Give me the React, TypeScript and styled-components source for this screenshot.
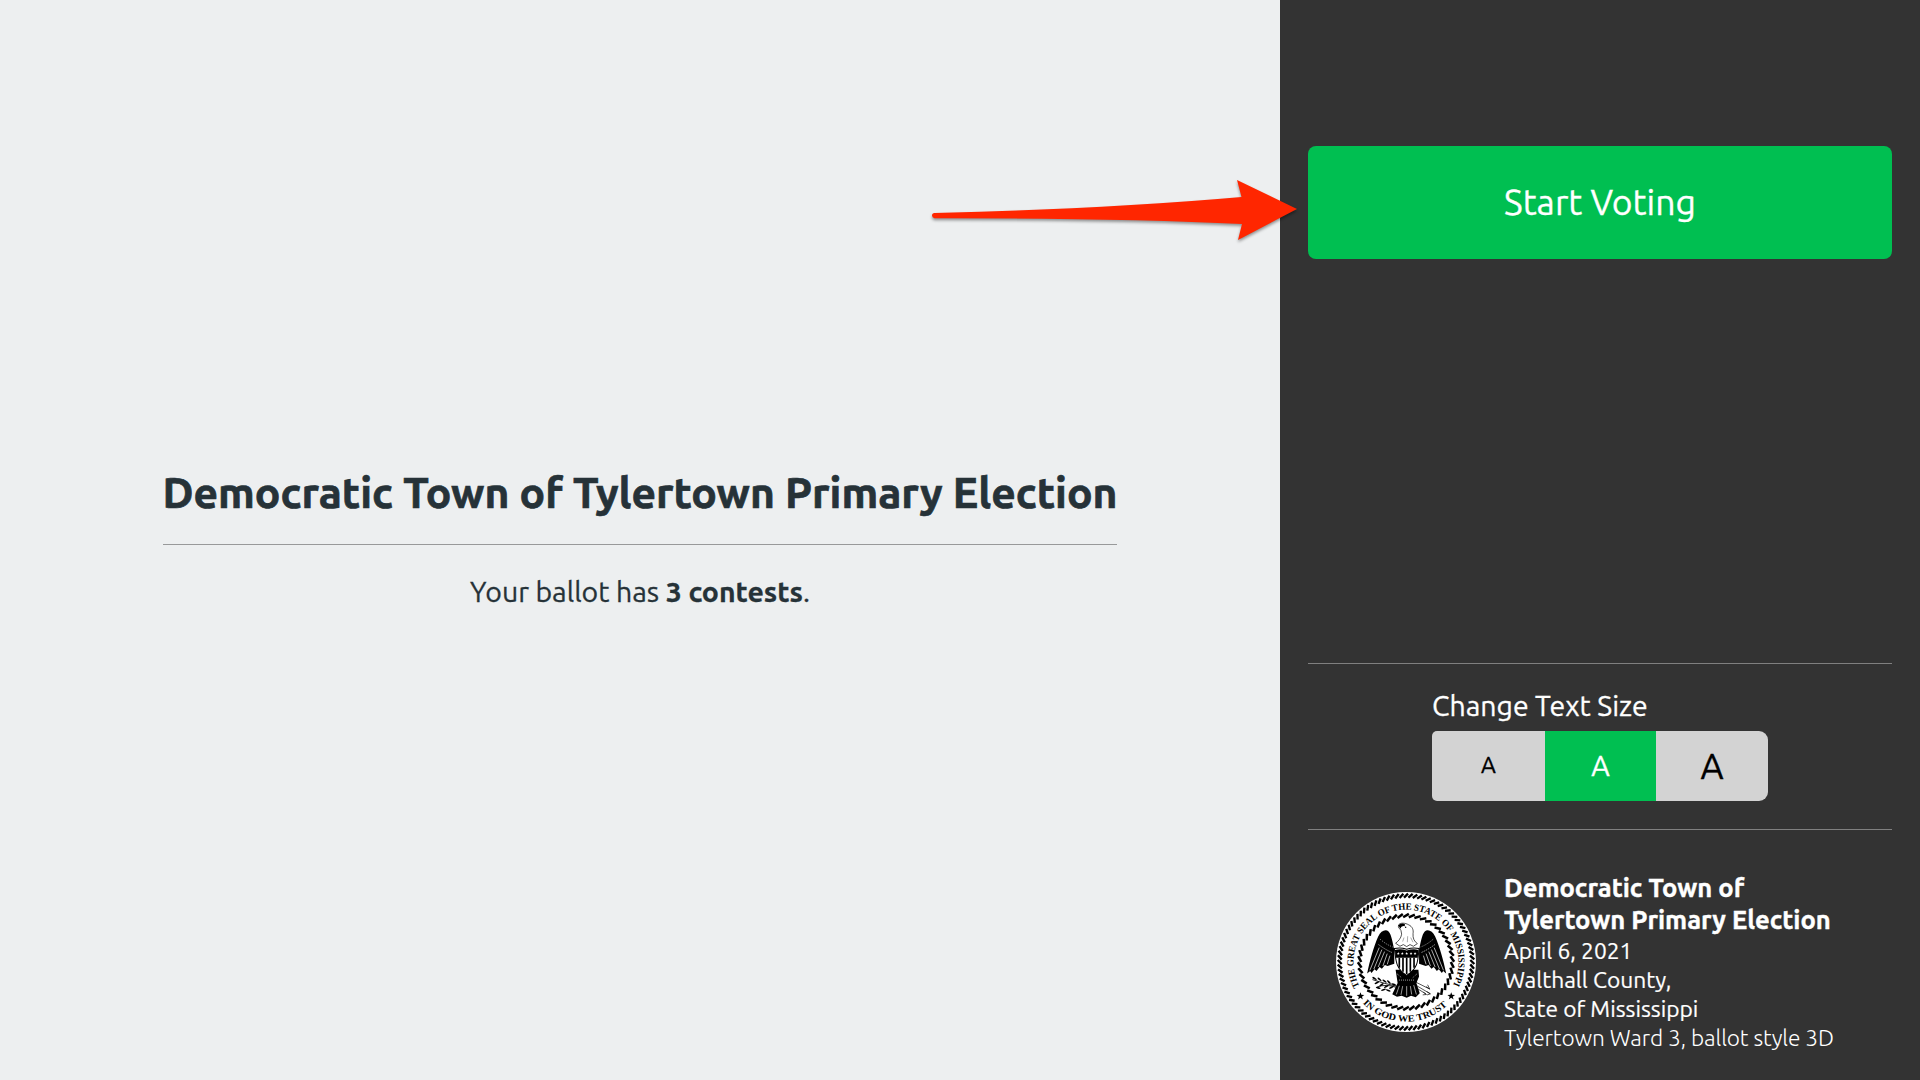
import React from 'react';
import styled, { createGlobalStyle } from 'styled-components';

const GlobalStyle = createGlobalStyle`
  *, *::before, *::after { box-sizing: border-box; }
  body {
    margin: 0;
    background: #edeff0;
    color: #263238;
    font-family: Ubuntu, 'Noto Sans', 'Open Sans', sans-serif;
    overflow: hidden;
  }
`;

const Screen = styled.div`
  position: relative;
  display: grid;
  grid-template-columns: 1280px 640px;
  width: 1920px;
  height: 1080px;
`;

const Main = styled.main`
  display: flex;
  flex-direction: column;
  align-items: center;
  padding-top: 463px;
  background: #edeff0;
`;

const Intro = styled.div`
  width: 954px;
  text-align: center;
`;

const Title = styled.h1`
  display: flex;
  justify-content: center;
  margin: 0;
  padding-bottom: 23px;
  border-bottom: 1px solid #98999a;
  font-size: 42.67px;
  line-height: 58px;
  font-weight: 700;
  white-space: nowrap;
  -webkit-text-stroke: 0.7px currentColor;
`;

const Summary = styled.p`
  margin: 28px 0 0;
  font-size: 28.44px;
  line-height: 37px;
  white-space: nowrap;
  -webkit-text-stroke: 0.3px currentColor;
`;

const Sidebar = styled.aside`
  display: flex;
  flex-direction: column;
  padding: 146px 28px 0;
  background: #333333;
  color: #ffffff;
`;

const StartButton = styled.button`
  height: 113px;
  padding: 0 0 2px;
  border: 0;
  border-radius: 8px;
  background: #00bf51;
  color: #ffffff;
  font-family: inherit;
  font-size: 35.56px;
  line-height: 46px;
  -webkit-text-stroke: 0.3px currentColor;
`;

const Settings = styled.section`
  display: flex;
  flex-direction: column;
  align-items: center;
  height: 167px;
  margin-top: 404px;
  padding-top: 23px;
  border-top: 1px solid #808080;
  border-bottom: 1px solid #808080;
`;

const SizePicker = styled.div`
  width: 336px;
`;

const SizeLabel = styled.div`
  height: 44px;
  font-size: 28.44px;
  line-height: 36px;
  white-space: nowrap;
  -webkit-text-stroke: 0.3px currentColor;
`;

const Segments = styled.div`
  display: grid;
  grid-template-columns: 113px 111px 112px;
  height: 70px;
  overflow: hidden;
  border-radius: 5px 9px 9px 5px;
`;

const Segment = styled.button<{ $size: number; $lift?: number; $active?: boolean }>`
  padding: 0 0 ${(p) => p.$lift ?? 0}px;
  border: 0;
  background: ${(p) => (p.$active ? '#00bf51' : '#d3d3d3')};
  color: ${(p) => (p.$active ? '#ffffff' : '#000000')};
  font-family: inherit;
  font-size: ${(p) => p.$size}px;
  line-height: 46px;
  -webkit-text-stroke: 0.3px currentColor;
`;

const Footer = styled.footer`
  display: flex;
  padding: 41px 0 0 28px;
`;

const SealSvg = styled.svg`
  flex: none;
  width: 140px;
  height: 140px;
  margin: 21px 28px 0 0;
`;

const Details = styled.div`
  padding-top: 1px;
  font-size: 22.75px;
  line-height: 29px;
  white-space: nowrap;
`;

const ElectionName = styled.div`
  font-size: 25.6px;
  line-height: 32px;
  font-weight: 700;
  -webkit-text-stroke: 0.4px currentColor;
`;

const Line = styled.div<{ $light?: boolean }>`
  font-weight: ${(p) => (p.$light ? 300 : 400)};
  letter-spacing: ${(p) => (p.$light ? -0.12 : 0)}px;
  -webkit-text-stroke: ${(p) => (p.$light ? 0 : 0.2)}px currentColor;
`;

const Pointer = styled.svg`
  position: absolute;
  left: 920px;
  top: 165px;
  width: 390px;
  height: 90px;
  filter: drop-shadow(0 2px 1.5px rgba(0, 0, 0, 0.4));
`;

function Rope({ radius, half, count, weight, lean }: { radius: number; half: number; count: number; weight: number; lean: number }) {
  return (
    <g stroke="#000" strokeWidth={weight}>
      {Array.from({ length: count }, (_, i) => (
        <line
          key={i}
          x1={-lean}
          y1={-radius + half}
          x2={lean}
          y2={-radius - half}
          transform={`translate(209 209) rotate(${(i * 360) / count})`}
        />
      ))}
    </g>
  );
}

const starPoints = (cx: number, cy: number, r: number) =>
  Array.from({ length: 10 }, (_, i) => {
    const a = (Math.PI * i) / 5 - Math.PI / 2;
    const q = i % 2 ? r * 0.4 : r;
    return `${(cx + q * Math.cos(a)).toFixed(1)},${(cy + q * Math.sin(a)).toFixed(1)}`;
  }).join(' ');

function Wing() {
  return (
    <g>
      <path
        d="M174 172 C170 156 166 127 157 118 C148 110 134 116 126 133 C112 164 101 206 93 243 L102 236 L106 242 L115 231 L121 236 L130 224 L137 229 L146 218 L154 221 L174 214 Z"
        fill="#000"
      />
      <g stroke="#fff" strokeWidth="2" fill="none">
        <path d="M129 166 L101 234" />
        <path d="M137 172 L113 230" />
        <path d="M145 178 L126 224" />
        <path d="M153 184 L140 221" />
        <path d="M161 190 L153 216" />
        <path d="M127 157 Q147 172 168 181" strokeDasharray="4 3" />
        <path d="M132 141 Q150 157 169 164" strokeDasharray="3 4" />
      </g>
    </g>
  );
}

function Seal() {
  return (
    <SealSvg viewBox="0 0 418 418" role="img" aria-label="Seal of Mississippi">
      <defs>
        <path id="seal-upper" d="M 71 283 A 156.5 156.5 0 1 1 347 283" />
        <path id="seal-lower" d="M 76 328 A 179 179 0 0 0 342 328" />
      </defs>
      <circle cx="209" cy="209" r="209" fill="#fff" />
      <Rope radius={198} half={6} count={92} weight={7} lean={6} />
      <Rope radius={138.5} half={5} count={50} weight={7.5} lean={8.5} />
      <g fontFamily="'Liberation Serif', serif" fontWeight="700" fontSize="28" fill="#000">
        <text>
          <textPath href="#seal-upper" startOffset="1" textLength="638" lengthAdjust="spacingAndGlyphs">THE GREAT SEAL OF THE STATE OF MISSISSIPPI</textPath>
        </text>
        <text>
          <textPath href="#seal-lower" startOffset="6" textLength="280" lengthAdjust="spacingAndGlyphs">IN GOD WE TRUST</textPath>
        </text>
      </g>
      <polygon points={starPoints(73, 311, 12)} />
      <polygon points={starPoints(344, 311, 12)} />

      <Wing />
      <g transform="translate(422 0) scale(-1 1)">
        <Wing />
      </g>

      <path d="M178 232 L246 232 L248 252 L240 272 L250 302 L238 314 L224 310 L211 316 L196 310 L182 313 L168 305 L184 272 Z" />
      <g stroke="#fff" strokeWidth="1.8" fill="none">
        <path d="M189 280 L180 306 M199 281 L194 307 M211 281 V310 M222 281 L226 306 M232 278 L240 306" />
        <path d="M182 244 L196 256 M242 244 L228 257 M188 263 H236" strokeDasharray="3 3" />
      </g>

      <path
        d="M178 153 C187 146 194 138 196 126 L194 115 C190 107 184 109 187 98 C192 91 207 92 217 98 C228 103 232 113 230 124 C229 138 233 147 243 154 L231 162 L221 157 L211 163 L201 157 L191 162 Z"
        fill="#fff"
        stroke="#000"
        strokeWidth="2"
      />
      <path d="M186 99 Q194 91 206 96 L205 102 Q195 99 192 110 Z" />
      <circle cx="208" cy="105" r="2.2" />
      <path d="M203 136 L199 148 M214 132 L213 150 M223 136 L230 150" stroke="#000" strokeWidth="1" />

      <path d="M174 169 Q192 164 211 171 Q231 164 248 169 C244 198 249 226 211 249 C174 226 180 198 174 169 Z" fill="#fff" stroke="#000" strokeWidth="3" />
      <path d="M176 173 Q194 168 211 175 Q230 168 246 173 L244 196 H178 Z" />
      {[186, 198, 211, 224, 236].map((x) => (
        <polygon key={x} points={starPoints(x, 184, 4.5)} fill="#fff" />
      ))}
      <path d="M189 196 V226 M200 196 V238 M211 196 V245 M222 196 V238 M233 196 V226" stroke="#000" strokeWidth="5" />

      <g stroke="#000" strokeWidth="2.5" fill="none" strokeLinecap="round">
        <path d="M110 262 Q145 274 184 282" />
        <path d="M124 283 Q150 274 178 284" />
        <path d="M236 277 L280 303 M240 270 L278 289 M242 288 L268 304" strokeWidth="2" />
        <path d="M270 283 L280 290 L274 278 M272 298 L282 304 L273 307 M262 300 L270 306 L260 307" strokeWidth="2" />
      </g>
      {[
        [115, 258, 30], [122, 271, -25], [130, 261, 40], [136, 277, -35], [145, 266, 35],
        [150, 282, -30], [158, 269, 45], [165, 285, -25], [142, 292, -20], [156, 294, 20], [172, 276, 20], [126, 286, 15],
      ].map(([x, y, a]) => (
        <ellipse key={`${x}-${y}`} cx={x} cy={y} rx="7.5" ry="2.6" transform={`rotate(${a} ${x} ${y})`} />
      ))}
    </SealSvg>
  );
}

export default function App() {
  return (
    <Screen>
      <GlobalStyle />
      <Main>
        <Intro>
          <Title>Democratic Town of Tylertown Primary Election</Title>
          <Summary>
            Your ballot has <strong>3 contests</strong>.
          </Summary>
        </Intro>
      </Main>
      <Sidebar>
        <StartButton>Start Voting</StartButton>
        <Settings>
          <SizePicker>
            <SizeLabel>Change Text Size</SizeLabel>
            <Segments>
              <Segment $size={22.75} $lift={2}>A</Segment>
              <Segment $size={28.44} $lift={2} $active>A</Segment>
              <Segment $size={35.56}>A</Segment>
            </Segments>
          </SizePicker>
        </Settings>
        <Footer>
          <Seal />
          <Details>
            <ElectionName>
              Democratic Town of
              <br />
              Tylertown Primary Election
            </ElectionName>
            <Line>April 6, 2021</Line>
            <Line>Walthall County,</Line>
            <Line>State of Mississippi</Line>
            <Line $light>Tylertown Ward 3, ballot style 3D</Line>
          </Details>
        </Footer>
      </Sidebar>
      <Pointer viewBox="0 0 390 90">
        <path
          d="M14.5 48 Q185 44 321.5 32 L317 15 L377 44 L318 75 L322 59 Q200 53 14.5 53.2 Q12 53 12 50.6 Q12 48 14.5 48 Z"
          fill="#ff2600"
        />
      </Pointer>
    </Screen>
  );
}
